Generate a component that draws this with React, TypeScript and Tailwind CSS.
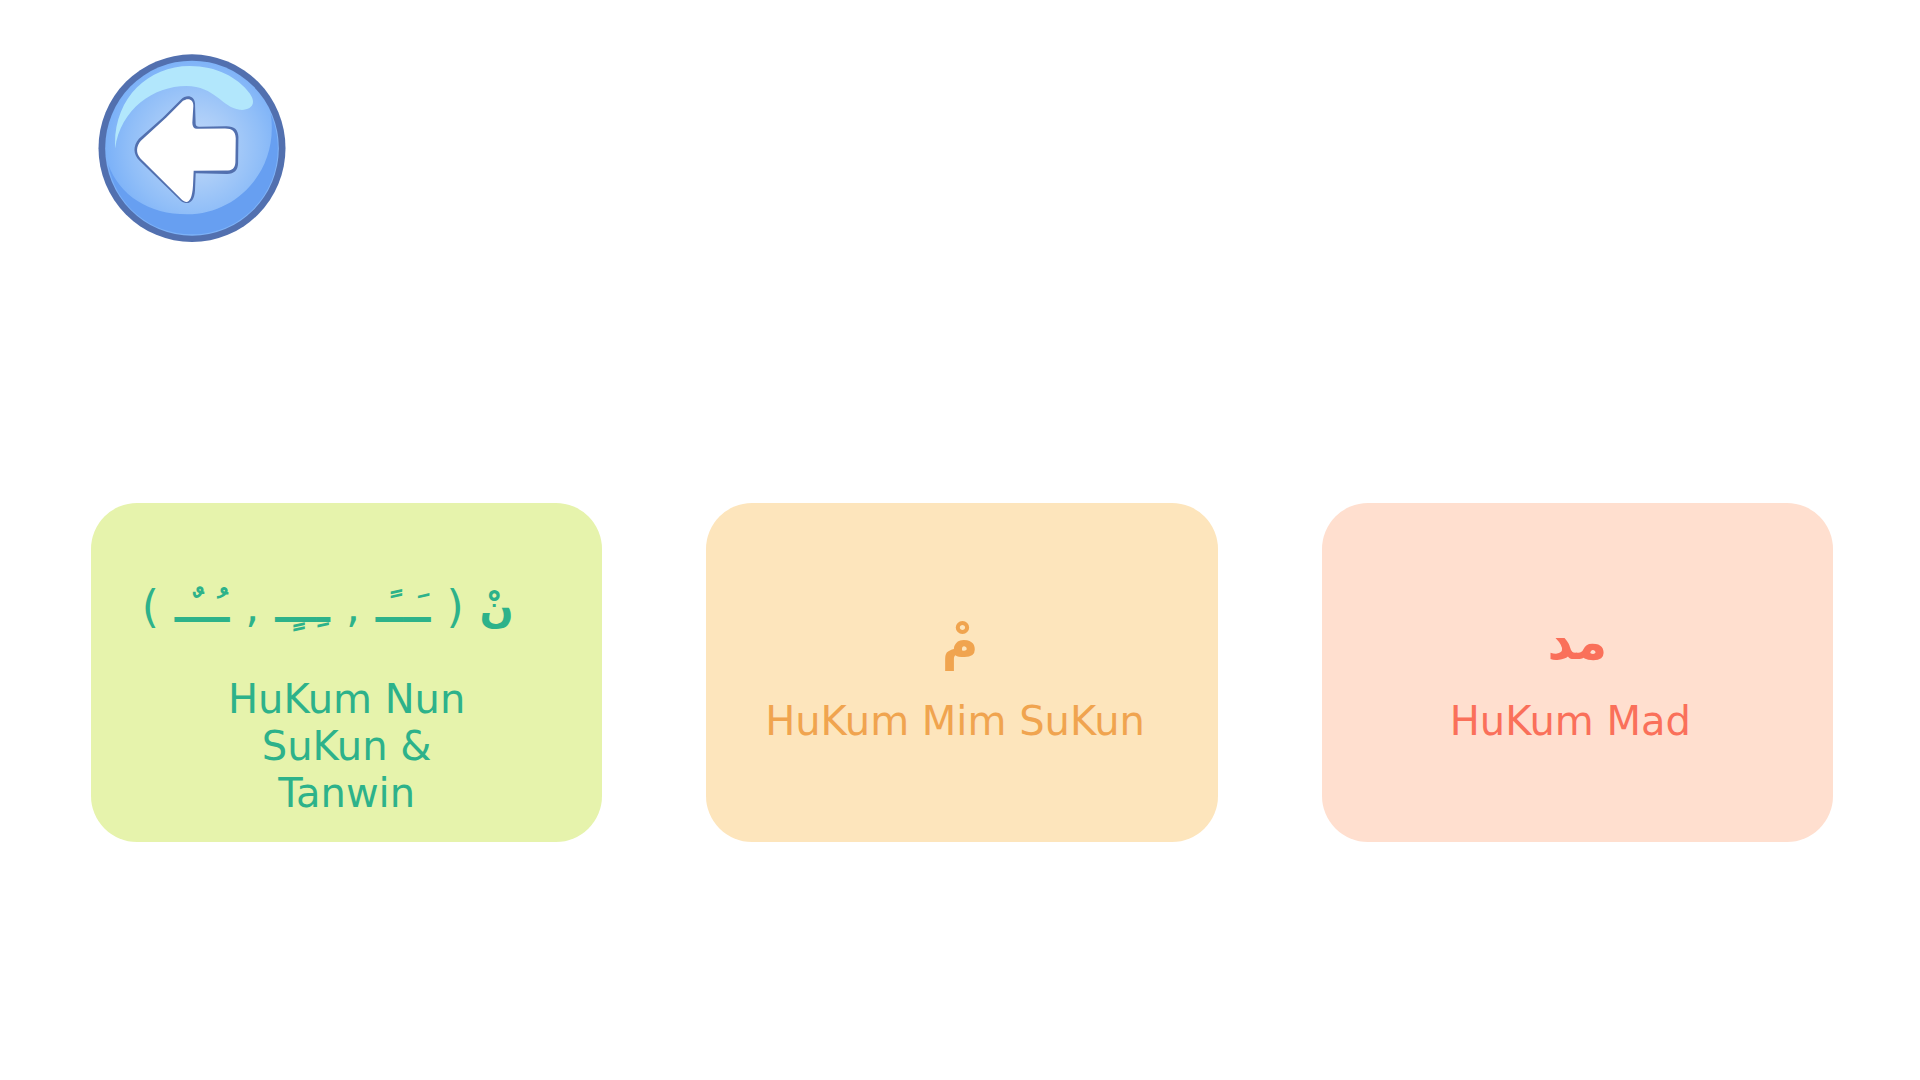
import React from "react";

function BackIcon() {
  return (
    <svg viewBox="54 42 562 563" className="block size-full" aria-hidden="true">
      <defs>
        <radialGradient id="face" gradientUnits="userSpaceOnUse" cx="345" cy="320" r="285">
          <stop offset="0" stopColor="#c3d9fa" />
          <stop offset="0.35" stopColor="#abcdf8" />
          <stop offset="0.7" stopColor="#90bef8" />
          <stop offset="1" stopColor="#76aef8" />
        </radialGradient>
      </defs>
      <ellipse cx="335" cy="324" rx="280" ry="281" fill="#5270af" />
      <ellipse cx="335" cy="324" rx="260" ry="262" fill="url(#face)" />
      <path
        d="M84 372 C118 466 206 522 320 522 C460 522 574 408 574 264 C574 246 573 232 570 220 C584 250 592 286 592 324 C592 468 478 582 335 582 C208 582 104 492 84 372 Z"
        fill="#679ff1"
      />
      <path
        d="M105 325 C97 180 200 78 328 78 C408 78 472 112 508 160 C534 198 502 212 478 209 C424 202 404 138 318 138 C220 138 120 208 105 325 Z"
        fill="#b2e7fc"
      />
      <path
        d="M302 178 C318 162 342 166 344 190 L346 252 Q347 261 358 260 L438 258 C462 258 473 268 474 290 L473 370 C472 390 462 401 440 401 L346 399 L344 450 C342 488 322 496 302 482 L178 362 C158 342 158 318 176 296 L248 232 Z"
        fill="#5270af"
      />
      <path
        d="M308 182 C324 172 340 178 339 198 L336 248 Q336 266 350 266 L434 265 C456 265 465 274 466 294 L465 366 C464 384 456 391 436 391 L340 392 L338 436 C335 488 320 492 304 478 L180 354 C166 338 168 318 182 302 L258 232 Z"
        fill="#ffffff"
      />
    </svg>
  );
}

function Mark({ children }: { children: string }) {
  return <span className="mx-0.5 text-[44px] font-normal">{children}</span>;
}

type Topic = {
  arabic: React.ReactNode;
  title: string;
  card: string;
  arabicStyle: string;
  titleStyle: string;
};

const topics: Topic[] = [
  {
    arabic: (
      <>
        نْ <Mark>(</Mark> ـَــًـ <Mark>,</Mark> ـِــٍـ <Mark>,</Mark> ـُــٌـ <Mark>)</Mark>
      </>
    ),
    title: "HuKum Nun SuKun & Tanwin",
    card: "bg-[#e6f3ac] text-[#2db28a] pt-16",
    arabicStyle: "mr-10 mb-7 text-[40px]",
    titleStyle: "w-[260px]",
  },
  {
    arabic: "مْ",
    title: "HuKum Mim SuKun",
    card: "bg-[#fde5bc] text-[#f0a44f] pt-[99px]",
    arabicStyle: "mr-1 mb-4 text-[50px]",
    titleStyle: "mr-3.5",
  },
  {
    arabic: "مد",
    title: "HuKum Mad",
    card: "bg-[#ffdfcf] text-[#fa705a] pt-[99px]",
    arabicStyle: "mb-4 text-[50px]",
    titleStyle: "mr-3.5",
  },
];

export default function App() {
  return (
    <div className="min-h-screen bg-white pt-[54px] pr-[87px] pb-16 pl-[91px] font-['DejaVu_Sans',sans-serif]">
      <nav className="pl-[7px]">
        <button type="button" aria-label="Kembali" className="block size-[188px] cursor-pointer rounded-full">
          <BackIcon />
        </button>
      </nav>
      <main className="mt-[261px] grid grid-cols-3 gap-[104px]">
        {topics.map((t) => (
          <button
            key={t.title}
            type="button"
            className={`flex min-h-[339px] cursor-pointer flex-col items-center rounded-[46px] ${t.card}`}
          >
            <span dir="rtl" lang="ar" className={`leading-[80px] font-bold whitespace-nowrap ${t.arabicStyle}`}>
              {t.arabic}
            </span>
            <span className={`text-[40px] leading-[47px] ${t.titleStyle}`}>{t.title}</span>
          </button>
        ))}
      </main>
    </div>
  );
}
